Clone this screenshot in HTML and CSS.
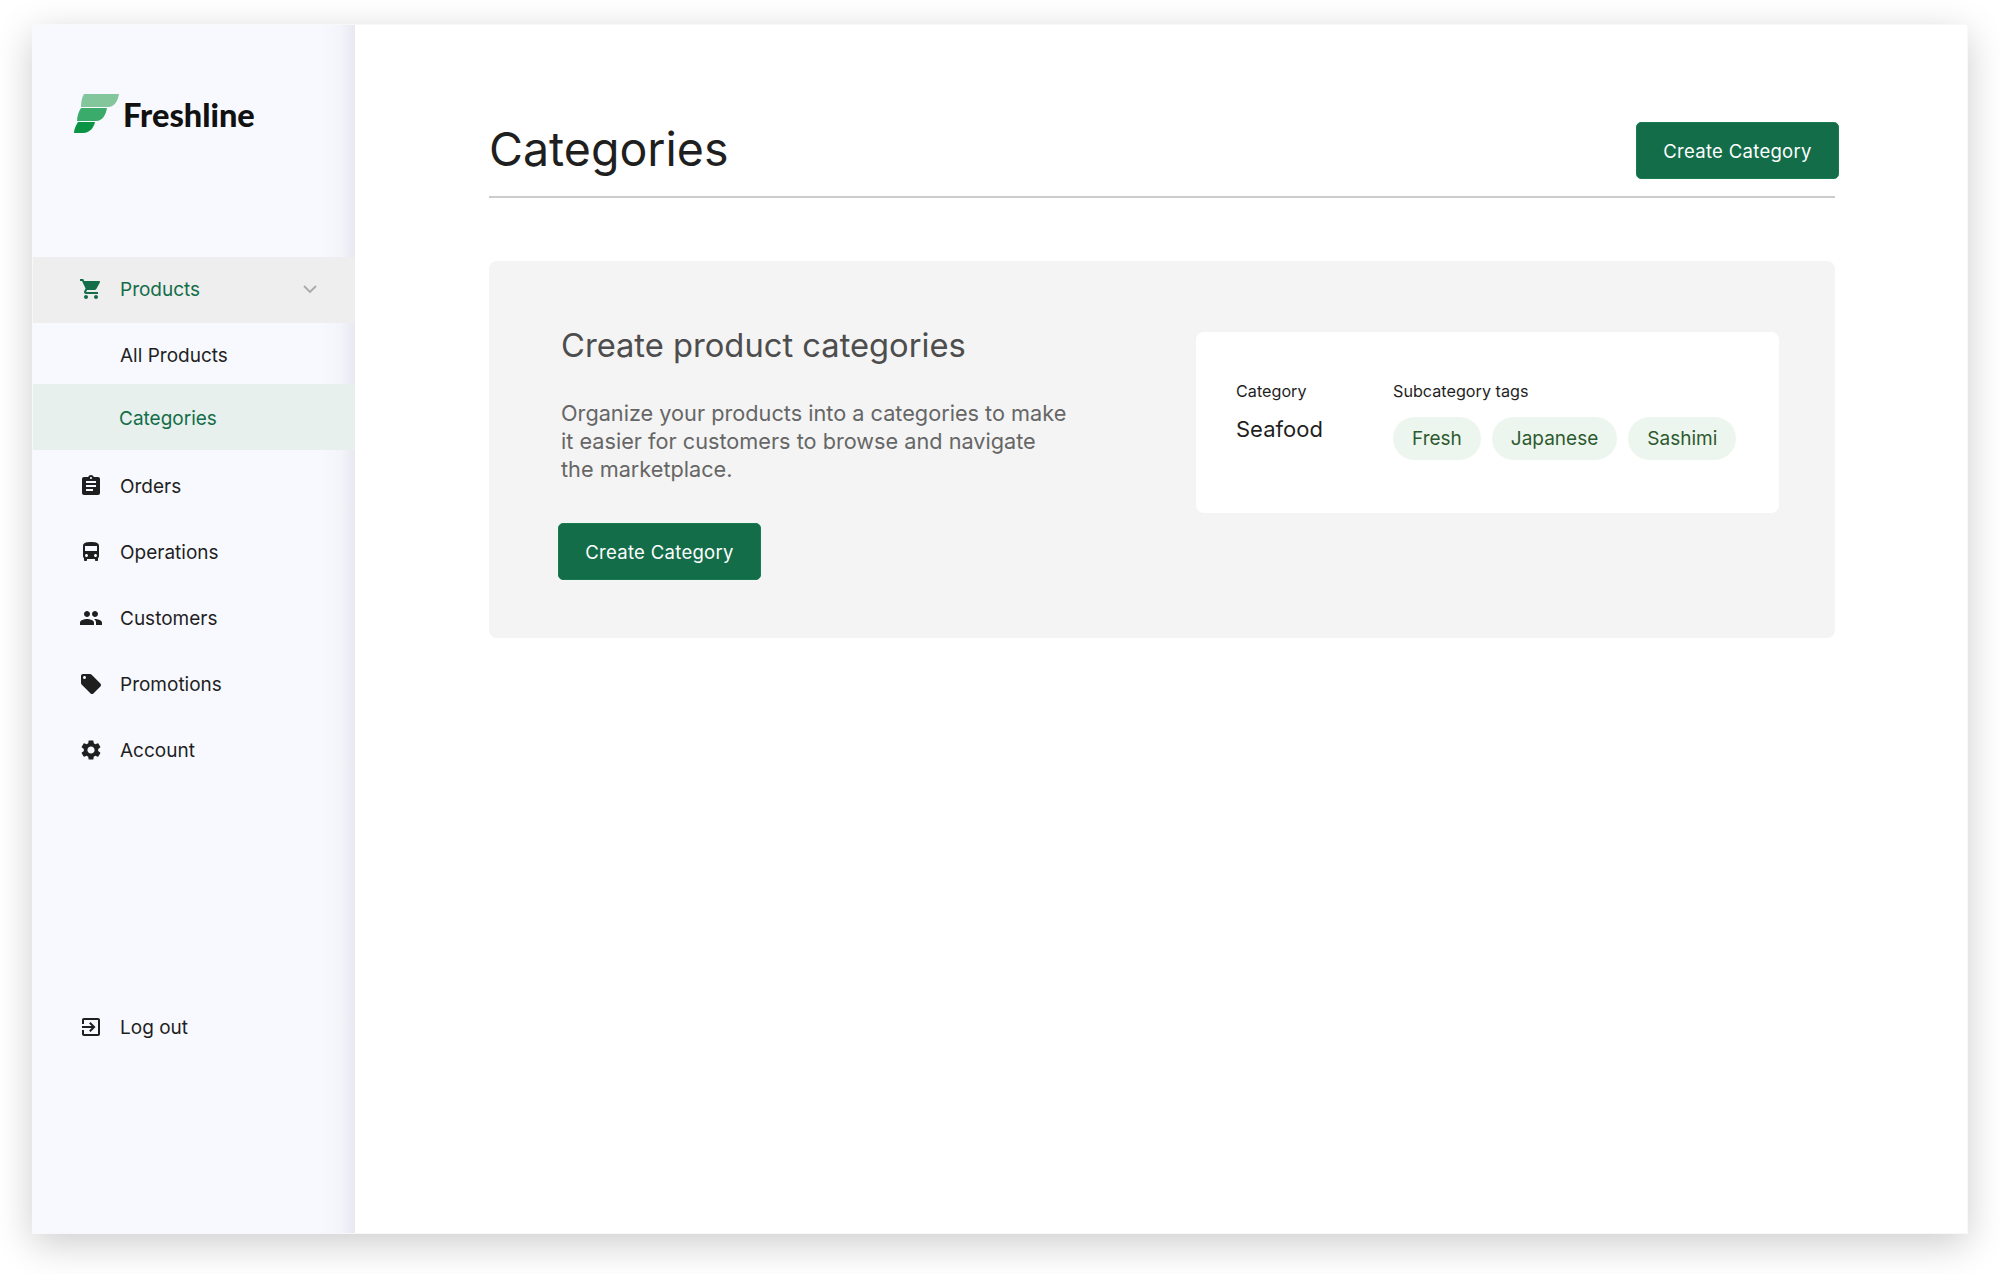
FILE: index.html
```html
<!DOCTYPE html>
<html lang="en">
<head>
    <meta charset="UTF-8">
    <title>Freshline - Categories</title>
    <link rel="stylesheet" href="styles.css">
</head>
<body>
    <div class="window">
        <aside class="sidebar">
            <div class="logo">
                <svg class="logo-mark" width="46" height="40" viewBox="0 0 46 40">
                    <path fill="#84c69b" d="M10 0H45C44 6 41 13 34 13H7C7 8 8 3 10 0z"/>
                    <path fill="#3bab6c" d="M7 14H33C32 20 29 27 22 27H3C3 22 5 17 7 14z"/>
                    <path fill="#0b9444" d="M4 28H21C20 33 16 39 9 39H0C0 35 2 31 4 28z"/>
                </svg>
                <span class="logo-text">Freshline</span>
            </div>

            <nav class="nav">
                <a class="nav-row nav-open">
                    <svg class="icon" viewBox="0 0 24 24"><path d="M7 18c-1.100 0-1.990.900-1.990 2S5.900 22 7 22s2-.900 2-2-.900-2-2-2zM1 2v2h2l3.600 7.590-1.350 2.450c-.160.280-.250.610-.250.960 0 1.100.900 2 2 2h12v-2H7.420c-.140 0-.250-.110-.250-.250l.030-.120.900-1.630h7.450c.750 0 1.410-.410 1.750-1.030l3.580-6.490c.080-.140.120-.310.120-.480 0-.550-.450-1-1-1H5.210l-.940-2H1zm16 16c-1.100 0-1.990.900-1.990 2s.890 2 1.990 2 2-.900 2-2-.900-2-2-2z"/></svg>
                    <span>Products</span>
                    <svg class="chevron" width="14" height="8" viewBox="0 0 14 8"><path d="M1 1l6 6 6-6" fill="none" stroke="#aaa" stroke-width="1.800"/></svg>
                </a>
                <a class="sub-row">All Products</a>
                <a class="sub-row sub-active">Categories</a>
                <a class="nav-row nav-first">
                    <svg class="icon" viewBox="0 0 24 24"><path d="M19 3h-4.180C14.400 1.840 13.300 1 12 1c-1.300 0-2.400.840-2.820 2H5c-1.100 0-2 .900-2 2v14c0 1.100.900 2 2 2h14c1.100 0 2-.900 2-2V5c0-1.100-.900-2-2-2zm-7 0c.550 0 1 .450 1 1s-.450 1-1 1-1-.450-1-1 .450-1 1-1zm2 14H7v-2h7v2zm3-4H7v-2h10v2zm0-4H7V7h10v2z"/></svg>
                    <span>Orders</span>
                </a>
                <a class="nav-row">
                    <svg class="icon" viewBox="0 0 24 24"><path d="M4 16c0 .880.390 1.670 1 2.220V20c0 .550.450 1 1 1h1c.550 0 1-.450 1-1v-1h8v1c0 .550.450 1 1 1h1c.550 0 1-.450 1-1v-1.780c.610-.550 1-1.340 1-2.220V6c0-3.500-3.580-4-8-4s-8 .500-8 4v10zm3.500 1c-.830 0-1.500-.670-1.500-1.500S6.670 14 7.500 14s1.500.670 1.500 1.500S8.330 17 7.500 17zm9 0c-.830 0-1.500-.670-1.500-1.500s.670-1.500 1.500-1.500 1.500.670 1.500 1.500-.670 1.500-1.500 1.500zm1.500-6H6V6h12v5z"/></svg>
                    <span>Operations</span>
                </a>
                <a class="nav-row">
                    <svg class="icon" viewBox="0 0 24 24"><path d="M16 11c1.660 0 2.990-1.340 2.990-3S17.660 5 16 5c-1.660 0-3 1.340-3 3s1.340 3 3 3zm-8 0c1.660 0 2.990-1.340 2.990-3S9.660 5 8 5C6.340 5 5 6.340 5 8s1.340 3 3 3zm0 2c-2.330 0-7 1.170-7 3.500V19h14v-2.500c0-2.330-4.670-3.500-7-3.500zm8 0c-.290 0-.620.020-.970.050 1.160.840 1.970 1.970 1.970 3.450V19h6v-2.500c0-2.330-4.670-3.500-7-3.500z"/></svg>
                    <span>Customers</span>
                </a>
                <a class="nav-row">
                    <svg class="icon" viewBox="0 0 24 24"><path d="M21.410 11.580l-9-9C12.050 2.220 11.550 2 11 2H4c-1.100 0-2 .900-2 2v7c0 .550.220 1.050.590 1.420l9 9c.360.360.860.580 1.410.580.550 0 1.050-.220 1.410-.590l7-7c.370-.360.590-.860.590-1.410 0-.550-.230-1.060-.590-1.420zM5.500 7C4.670 7 4 6.330 4 5.500S4.670 4 5.500 4 7 4.670 7 5.500 6.330 7 5.500 7z"/></svg>
                    <span>Promotions</span>
                </a>
                <a class="nav-row">
                    <svg class="icon" viewBox="0 0 24 24"><path d="M19.140 12.940c.040-.300.060-.610.060-.940 0-.320-.020-.640-.070-.940l2.030-1.580c.180-.140.230-.410.120-.610l-1.920-3.320c-.120-.220-.370-.290-.590-.220l-2.390.960c-.500-.380-1.030-.700-1.620-.940l-.360-2.540c-.040-.240-.240-.410-.480-.410h-3.840c-.240 0-.430.170-.470.410l-.360 2.540c-.590.240-1.130.570-1.620.940l-2.390-.960c-.220-.080-.470 0-.590.220L2.740 8.870c-.120.210-.080.470.120.610l2.030 1.580c-.050.300-.090.630-.090.940s.020.640.070.940l-2.030 1.580c-.180.140-.230.410-.12.610l1.920 3.320c.120.220.370.290.590.220l2.390-.960c.500.380 1.030.700 1.620.940l.360 2.540c.050.240.240.410.480.410h3.840c.240 0 .440-.170.470-.410l.360-2.540c.590-.240 1.130-.560 1.620-.940l2.390.960c.220.080.470 0 .590-.220l1.920-3.320c.120-.220.070-.470-.12-.61l-2.010-1.580zM12 15.600c-1.980 0-3.600-1.620-3.600-3.600s1.620-3.600 3.600-3.600 3.600 1.620 3.600 3.600-1.620 3.600-3.600 3.600z"/></svg>
                    <span>Account</span>
                </a>
            </nav>

            <a class="nav-row logout">
                <svg class="icon" viewBox="0 0 24 24"><path d="M10.090 15.590L11.500 17l5-5-5-5-1.410 1.410L12.670 11H3v2h9.670l-2.580 2.590zM19 3H5c-1.110 0-2 .900-2 2v4h2V5h14v14H5v-4H3v4c0 1.100.890 2 2 2h14c1.100 0 2-.900 2-2V5c0-1.100-.900-2-2-2z"/></svg>
                <span>Log out</span>
            </a>
        </aside>

        <main class="main">
            <header class="page-head">
                <h1>Categories</h1>
                <button class="btn btn-head">Create Category</button>
            </header>

            <section class="panel">
                <div class="panel-text">
                    <h2>Create product categories</h2>
                    <p>Organize your products into a categories to make it easier for customers to browse and navigate the marketplace.</p>
                    <button class="btn btn-panel">Create Category</button>
                </div>
                <div class="sample">
                    <div class="sample-cat">
                        <div class="sample-label">Category</div>
                        <div class="sample-name">Seafood</div>
                    </div>
                    <div>
                        <div class="sample-label">Subcategory tags</div>
                        <div class="tags">
                            <span class="tag">Fresh</span>
                            <span class="tag">Japanese</span>
                            <span class="tag">Sashimi</span>
                        </div>
                    </div>
                </div>
            </section>
        </main>
    </div>
</body>
</html>
```

FILE: styles.css
```css
* {
    box-sizing: border-box;
}
body {
    margin: 0;
    padding: 24px 32px 40px;
    height: 1274px;
    overflow: hidden;
    font-family: Inter, "Liberation Sans", sans-serif;
    background-color: white;
    color: #1f1f1f;
}
.window {
    display: flex;
    height: 100%;
    background: white;
    border: 1px solid #f8f8f8;
    box-shadow: 0 10px 36px rgba(0,0,0,0.2);
}

/* sidebar */
.sidebar {
    width: 322px;
    flex-shrink: 0;
    display: flex;
    flex-direction: column;
    position: relative;
    background-color: #f8f9fe;
}
.sidebar::after {
    content: "";
    position: absolute;
    top: 0;
    right: 0;
    bottom: 0;
    width: 36px;
    background: linear-gradient(to right, rgba(40,40,80,0), rgba(40,40,80,0.02) 60%, rgba(40,40,80,0.08));
    pointer-events: none;
}
.logo {
    height: 232px;
    padding: 69px 0 0 41px;
    display: flex;
    align-items: flex-start;
    gap: 3px;
}
.logo-text {
    font-family: Lato, sans-serif;
    font-weight: 900;
    font-size: 32.500px;
    line-height: 48px;
    color: #111;
    margin-top: -3px;
}
.nav-row {
    display: flex;
    align-items: center;
    height: 66px;
    padding-left: 46px;
    gap: 17px;
    font-size: 19px;
}
.icon {
    width: 24px;
    height: 24px;
    fill: #1f1f1f;
    flex-shrink: 0;
}
/* these two rows sit above the sidebar's edge shade */
.nav-open {
    position: relative;
    z-index: 1;
    padding-bottom: 2px;
    background-color: #eeeeee;
    color: #136d49;
}
.nav-open .icon {
    fill: #136d49;
}
.chevron {
    margin-left: auto;
    margin-right: 38px;
}
.nav-first {
    margin-top: 3px;
}
.sub-row {
    display: flex;
    align-items: center;
    padding: 3px 0 0 87px;
    height: 61px;
    font-size: 19px;
}
.sub-active {
    position: relative;
    z-index: 1;
    height: 66px;
    padding: 2px 0 0 86px;
    background-color: #e7f0ec;
    color: #136d49;
}
.logout {
    margin-top: auto;
    margin-bottom: 173px;
}

/* main area */
.main {
    flex: 1;
    padding: 97px 132px 0 134px;
}
.page-head {
    display: flex;
    justify-content: space-between;
    align-items: flex-start;
    height: 76px;
    border-bottom: 2px solid #cccccc;
}
h1 {
    margin: -1px 0 0;
    font-size: 46.500px;
    font-weight: 400;
    line-height: 56px;
}
.btn {
    width: 203px;
    height: 57px;
    padding: 0;
    border: 1px solid #1a7a52;
    border-radius: 5px;
    background-color: #136d49;
    color: white;
    font-family: inherit;
    font-size: 18.500px;
    letter-spacing: 0.3px;
}
.btn-head {
    margin: 0 -4px 0 0;
}
.panel {
    display: flex;
    justify-content: space-between;
    margin-top: 63px;
    height: 377px;
    padding: 71px 56px 0 72px;
    background-color: #f4f4f4;
    border-radius: 8px;
}
.panel-text {
    width: 508px;
}
h2 {
    margin: -7px 0 0;
    font-size: 32.700px;
    font-weight: 400;
    line-height: 40px;
    color: #4d4d4d;
}
.panel-text p {
    margin: 34px 0 0;
    font-size: 21.700px;
    line-height: 28px;
    color: #666666;
}
.btn-panel {
    margin: 40px 0 0 -3px;
}
.sample {
    width: 583px;
    height: 181px;
    padding: 48px 0 0 40px;
    display: flex;
    gap: 71px;
    background: white;
    border-radius: 8px;
}
.sample-cat {
    width: 86px;
}
.sample-label {
    font-size: 16.200px;
    line-height: 22px;
}
.sample-name {
    margin-top: 12px;
    font-size: 22px;
    line-height: 30px;
}
.tags {
    display: flex;
    gap: 11px;
    margin-top: 15px;
}
.tag {
    display: flex;
    align-items: center;
    height: 43px;
    padding: 0 19px;
    border-radius: 22px;
    background-color: #edf6ee;
    color: #2d5a30;
    font-size: 19px;
}
```
